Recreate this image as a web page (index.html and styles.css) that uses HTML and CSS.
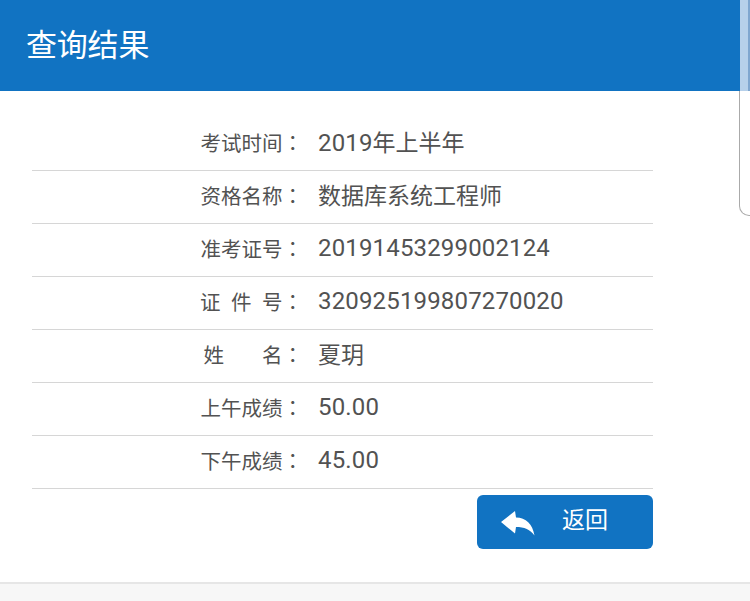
FILE: index.html
```html
<!DOCTYPE HTML>
<html>
<head>
<meta charset="utf-8">
<title>查询结果</title>
<link rel="stylesheet" href="styles.css">
</head>

<body>
<div class="page">
	<div class="head">查询结果</div>
	<div class="box">
		<ul class="list">
			<li><span class="label">考试时间<i class="colon">：</i></span><span class="val"><span class="digits">2019</span>年上半年</span></li>
			<li><span class="label">资格名称<i class="colon">：</i></span><span class="val">数据库系统工程师</span></li>
			<li><span class="label">准考证号<i class="colon">：</i></span><span class="val num">20191453299002124</span></li>
			<li><span class="label"><span class="sp">证</span><span class="sp">件</span>号<i class="colon">：</i></span><span class="val num">320925199807270020</span></li>
			<li><span class="label"><span class="sp2">姓</span>名<i class="colon">：</i></span><span class="val">夏玥</span></li>
			<li><span class="label">上午成绩<i class="colon">：</i></span><span class="val num">50.00</span></li>
			<li><span class="label">下午成绩<i class="colon">：</i></span><span class="val num">45.00</span></li>
		</ul>
		<div class="btns">
			<a href="javascript:;" class="back">
				<svg class="back-ico" width="34" height="26" viewBox="0 0 34 26"><path d="M0 12 L14 1 L15 7.500 C25 7.500 31.500 14 33.500 25.500 C29.500 19.500 23 17 15 17 L14 23.500 Z" fill="#fff"/></svg>
				<span>返回</span>
			</a>
		</div>
	</div>
	<div class="foot"></div>
</div>
<div class="side"></div>
<div class="side-strip"></div>
</body>
</html>
```

FILE: styles.css
```css
* {margin:0; padding:0; box-sizing:border-box;}
li {list-style:none;}
html, body {height:601px; overflow:hidden;}
body {background:#fff; font-family:Roboto, "Noto Sans CJK SC", sans-serif; color:#525252;}

.page {width:750px; height:601px; display:flex; flex-direction:column;}
.head {height:91px; padding-left:26px; background:#1173c2; color:#fff; font-size:31px; line-height:92px; letter-spacing:-.2px;}
.box {height:493px; padding:27px 97px 0 32px; background:#fff; border-bottom:2px solid #e6e6e6;}
.foot {flex:1; background:#f7f7f7;}

.list li {height:53px; display:flex; align-items:center; gap:15px; padding-bottom:4px; border-bottom:1px solid #d6d6d6;}
.label {width:271px; text-align:right; font-size:20.5px;}
.colon {font-style:normal; font-family:"Noto Sans CJK TC", sans-serif;}
.val {font-size:23px; margin-bottom:2px;}
.num {font-size:24px; letter-spacing:.16px; margin-bottom:0;}
.digits {font-size:24px; letter-spacing:.16px;}
.sp {margin-right:10.5px;}
.sp2 {margin-right:38px;}

.btns {display:flex; justify-content:flex-end; padding-top:6px;}
.back {width:176px; height:54px; display:flex; align-items:center; padding-left:24px; background:#1173c2; border-radius:6px; color:#fff; font-size:23px; text-decoration:none;}
.back-ico {margin-right:27px; margin-top:1px;}
.back span {margin-bottom:8px;}

.side {position:absolute; left:739px; top:91px; width:20px; height:125px; border:1px solid #aaa; border-top:0; border-bottom-left-radius:10px;}
.side-strip {position:absolute; left:740px; top:0; width:10px; height:91px; background:#b6d0ea; border-right:2px solid #7fa6cf;}
```
